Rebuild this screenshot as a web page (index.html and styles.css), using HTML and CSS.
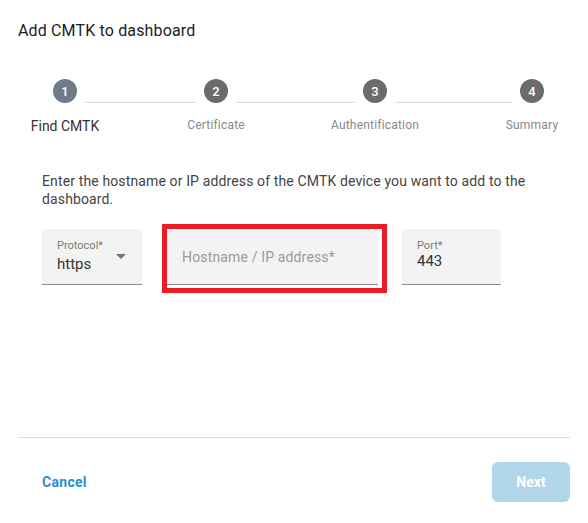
FILE: index.html
```html
<!DOCTYPE html>
<html>
<head>
<meta charset="utf-8">
<link rel="stylesheet" href="styles.css">
</head>
<body>
<div class="dialog">
  <div class="content">
    <h1 class="title">Add CMTK to dashboard</h1>
    <div class="stepper">
      <div class="step active">
        <div class="circle">1</div>
        <div class="label">Find CMTK</div>
      </div>
      <div class="line l1"></div>
      <div class="step">
        <div class="circle">2</div>
        <div class="label">Certificate</div>
      </div>
      <div class="line l2"></div>
      <div class="step">
        <div class="circle">3</div>
        <div class="label">Authentification</div>
      </div>
      <div class="line l3"></div>
      <div class="step">
        <div class="circle">4</div>
        <div class="label">Summary</div>
      </div>
    </div>
    <p class="desc">Enter the hostname or IP address of the CMTK device you want to add to the dashboard.</p>
    <div class="fields">
      <div class="field protocol">
        <div class="field-text">
          <div class="field-label">Protocol*</div>
          <div class="field-value">https</div>
        </div>
        <div class="arrow"></div>
      </div>
      <div class="field host highlighted">
        <div class="placeholder">Hostname / IP address*</div>
      </div>
      <div class="field port">
        <div class="field-text">
          <div class="field-label">Port*</div>
          <div class="field-value">443</div>
        </div>
      </div>
    </div>
  </div>
  <div class="footer">
    <span class="cancel">Cancel</span>
    <button class="next">Next</button>
  </div>
</div>
</body>
</html>
```
FILE: styles.css
```css
* { box-sizing: border-box; }
html, body {
  margin: 0;
  padding: 0;
  background: #ffffff;
}
body {
  font-family: Roboto, "Liberation Sans", sans-serif;
  color: #222;
}
.dialog {
  height: 523px;
  padding: 0 18px;
  display: flex;
  flex-direction: column;
}
.content {
  flex: 1;
}
.title {
  margin: 21px 0 0 0;
  font-size: 16px;
  line-height: 20px;
  font-weight: 400;
  letter-spacing: 0.15px;
  color: #212121;
}
.stepper {
  margin-top: 38px;
  display: flex;
  align-items: flex-start;
  padding: 0 26px 0 35px;
}
.step {
  width: 24px;
  display: flex;
  flex-direction: column;
  align-items: center;
}
.circle {
  width: 24px;
  height: 24px;
  border-radius: 50%;
  background: #6b6b6b;
  color: #fff;
  font-size: 13px;
  font-weight: 500;
  display: flex;
  align-items: center;
  justify-content: center;
}
.step.active .circle {
  background: #6f7b89;
}
.label {
  margin-top: 14px;
  white-space: nowrap;
  font-size: 12px;
  letter-spacing: 0.2px;
  line-height: 16px;
  color: #888;
}
.step.active .label {
  margin-top: 15px;
  font-size: 14px;
  letter-spacing: 0;
  color: #333;
}
.line {
  margin: 23px 8px 0 8px;
  height: 1px;
  background: #dcdcdc;
  flex-basis: 0;
}
.l1 { flex-grow: 111; }
.l2 { flex-grow: 119; }
.l3 { flex-grow: 117; }
.desc {
  margin: 38px 0 0 0;
  padding: 0 24px;
  font-size: 14px;
  line-height: 18px;
  letter-spacing: 0.13px;
  color: #444;
}
.fields {
  margin-top: 21px;
  padding-left: 24px;
  display: flex;
  align-items: flex-start;
}
.field {
  position: relative;
  height: 56px;
  background: #f3f3f3;
  border-bottom: 1px solid #8a8a8a;
  border-radius: 4px 4px 0 0;
  padding: 0 15px;
  display: flex;
}
.protocol {
  width: 100px;
  padding-right: 16px;
  justify-content: space-between;
}
.host {
  width: 211px;
  margin-left: 25px;
  align-items: center;
}
.port {
  width: 99px;
  margin-left: 24px;
}
.field-text {
  padding-top: 10px;
}
.field-label {
  font-size: 11px;
  line-height: 13px;
  color: #7a7a7a;
}
.field-value {
  font-size: 15px;
  line-height: 18px;
  color: #333;
}
.protocol .field-value {
  margin-top: 3px;
}
.arrow {
  align-self: center;
  width: 0;
  height: 0;
  border-left: 5px solid transparent;
  border-right: 5px solid transparent;
  border-top: 5px solid #757575;
}
.placeholder {
  font-size: 14px;
  line-height: 20px;
  letter-spacing: 0.15px;
  color: #9a9a9a;
}
.highlighted::after {
  content: "";
  position: absolute;
  left: -5px;
  top: -5px;
  right: -9px;
  bottom: -9px;
  border: 5px solid #ec1c24;
  pointer-events: none;
}
.footer {
  border-top: 1px solid #dcdcdc;
  padding: 24px 0 21px 24px;
  display: flex;
  align-items: center;
  justify-content: space-between;
}
.cancel {
  font-size: 14px;
  font-weight: 700;
  letter-spacing: 0.3px;
  color: #2c8ecf;
}
.next {
  width: 78px;
  height: 40px;
  border: none;
  border-radius: 6px;
  background: #b1d5ea;
  color: #fff;
  font-family: Roboto, "Liberation Sans", sans-serif;
  font-size: 14px;
  font-weight: 700;
  padding: 0;
}
```
